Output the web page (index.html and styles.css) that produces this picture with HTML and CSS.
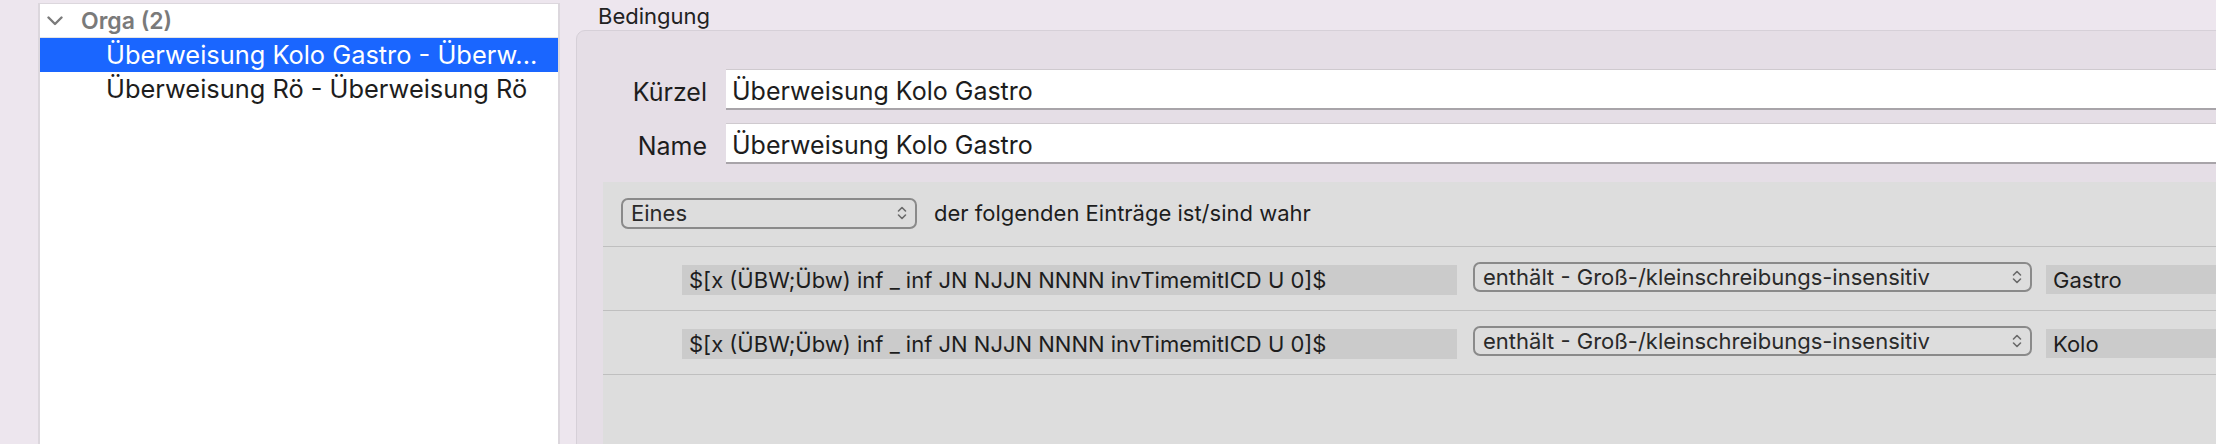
FILE: index.html
```html
<!DOCTYPE html>
<html lang="de">
    <head>
        <meta charset="utf-8">
        <title>Bedingung</title>
        <link rel="stylesheet" href="styles.css">
    </head>

    <body>
        <div class="app">
            <aside class="sidebar">
                <div class="tree">
                    <div class="group">
                        <svg class="disclosure" width="16" height="10" viewBox="0 0 16 10"><path d="M1.5 1.5 L8 8 L14.5 1.5"/></svg>
                        <span>Orga (2)</span>
                    </div>
                    <div class="item selected">Überweisung Kolo Gastro - Überw...</div>
                    <div class="item">Überweisung Rö - Überweisung Rö</div>
                </div>
            </aside>

            <main class="detail">
                <div class="section-title">Bedingung</div>
                <div class="box">
                    <div class="form-row">
                        <label>Kürzel</label>
                        <div class="textfield">Überweisung Kolo Gastro</div>
                    </div>
                    <div class="form-row">
                        <label>Name</label>
                        <div class="textfield">Überweisung Kolo Gastro</div>
                    </div>

                    <div class="criteria">
                        <div class="criteria-head">
                            <div class="popup mode">
                                <span>Eines</span>
                                <svg class="updown" width="10" height="16" viewBox="0 0 10 16"><path d="M1.5 6 L5 2.5 L8.5 6 M1.5 10 L5 13.5 L8.5 10"/></svg>
                            </div>
                            <span>der folgenden Einträge ist/sind wahr</span>
                        </div>

                        <div class="criterion">
                            <div class="field">$[x (ÜBW;Übw) inf _ inf JN NJJN NNNN invTimemitICD U 0]$</div>
                            <div class="popup op">
                                <span>enthält - Groß-/kleinschreibungs-insensitiv</span>
                                <svg class="updown" width="10" height="16" viewBox="0 0 10 16"><path d="M1.5 6 L5 2.5 L8.5 6 M1.5 10 L5 13.5 L8.5 10"/></svg>
                            </div>
                            <div class="value">Gastro</div>
                        </div>

                        <div class="criterion">
                            <div class="field">$[x (ÜBW;Übw) inf _ inf JN NJJN NNNN invTimemitICD U 0]$</div>
                            <div class="popup op">
                                <span>enthält - Groß-/kleinschreibungs-insensitiv</span>
                                <svg class="updown" width="10" height="16" viewBox="0 0 10 16"><path d="M1.5 6 L5 2.5 L8.5 6 M1.5 10 L5 13.5 L8.5 10"/></svg>
                            </div>
                            <div class="value">Kolo</div>
                        </div>
                    </div>
                </div>
            </main>
        </div>
    </body>
</html>
```

FILE: styles.css
```css
html, body {
    margin: 0;
    padding: 0;
    height: 100%;
}
body {
    background: #ede6ee;
    font-family: Inter, "Noto Sans", sans-serif;
    color: #1d1d1d;
    overflow: hidden;
}
.app {
    display: flex;
    height: 444px;
    overflow: hidden;
}

/* left list */
.sidebar {
    flex: none;
    box-sizing: border-box;
    width: 560px;
    padding: 3px 0 0 38px;
}
.tree {
    height: 100%;
    box-sizing: border-box;
    background: #fff;
    border: 2px solid #dcd7dd;
    border-top-width: 1px;
    border-bottom: 0;
}
.group {
    height: 33px;
    display: flex;
    align-items: center;
    gap: 18px;
    padding-left: 7px;
    border-bottom: 1px solid #e4e4e4;
    font-size: 23px;
    font-weight: 600;
    color: #7a7a7a;
}
.disclosure path { fill: none; stroke: #7b7b7b; stroke-width: 2.4; stroke-linecap: round; stroke-linejoin: round; }
.item {
    height: 34px;
    line-height: 34px;
    padding-left: 66px;
    font-size: 25.4px;
    white-space: nowrap;
    overflow: hidden;
}
.item.selected { background: #1a66ff; color: #fff; }

/* right side */
.detail {
    flex: 1;
    min-width: 0;
    padding-left: 16px;
    overflow: hidden;
}
.section-title {
    height: 30px;
    line-height: 32px;
    padding-left: 22px;
    font-size: 22px;
    color: #222;
}
.box {
    box-sizing: border-box;
    height: 440px;
    margin-right: -30px;
    padding-top: 38px;
    overflow: hidden;
    background: #e5dee6;
    border: 1px solid #d6d0d8;
    border-radius: 9px;
}
.form-row {
    display: flex;
    align-items: center;
    gap: 19px;
}
.form-row + .form-row { margin-top: 13px; }
.form-row label {
    width: 130px;
    text-align: right;
    font-size: 25px;
    padding-top: 4px;
}
.textfield {
    flex: 1;
    height: 41px;
    box-sizing: border-box;
    display: flex;
    align-items: center;
    padding: 4px 6px 0;
    background: #fff;
    border-top: 1px solid #cfcacf;
    border-bottom: 2px solid #a8a4a9;
    font-size: 25px;
}

/* criteria panel */
.criteria {
    margin: 18px 0 0 26px;
    height: 300px;
    background: #dddddd;
    font-size: 22px;
}
.criteria-head {
    display: flex;
    align-items: center;
    gap: 17px;
    height: 65px;
    box-sizing: border-box;
    padding: 0 18px 2px;
    border-bottom: 1px solid #bfbfbf;
}
.popup {
    height: 31px;
    box-sizing: border-box;
    display: flex;
    align-items: center;
    justify-content: space-between;
    padding: 0 8px 0 8px;
    border: 2px solid #8a8a8a;
    border-radius: 7px;
    color: #2a2a2a;
}
.popup.mode { width: 296px; }
.updown path { fill: none; stroke: #6a6a6a; stroke-width: 1.6; stroke-linecap: round; stroke-linejoin: round; }
.criterion {
    display: flex;
    align-items: flex-start;
    height: 64px;
    box-sizing: border-box;
    padding-left: 79px;
    border-bottom: 1px solid #bfbfbf;
}
.field {
    flex: none;
    width: 775px;
    height: 30px;
    box-sizing: border-box;
    margin-top: 18px;
    padding-left: 7px;
    line-height: 31px;
    background: #cbcbcb;
    white-space: nowrap;
}
.popup.op {
    flex: none;
    width: 559px;
    height: 30px;
    margin: 15px 0 0 16px;
}
.value {
    flex: 1;
    height: 29px;
    margin: 18px 0 0 14px;
    padding-left: 7px;
    line-height: 31px;
    background: #cbcbcb;
}
```
